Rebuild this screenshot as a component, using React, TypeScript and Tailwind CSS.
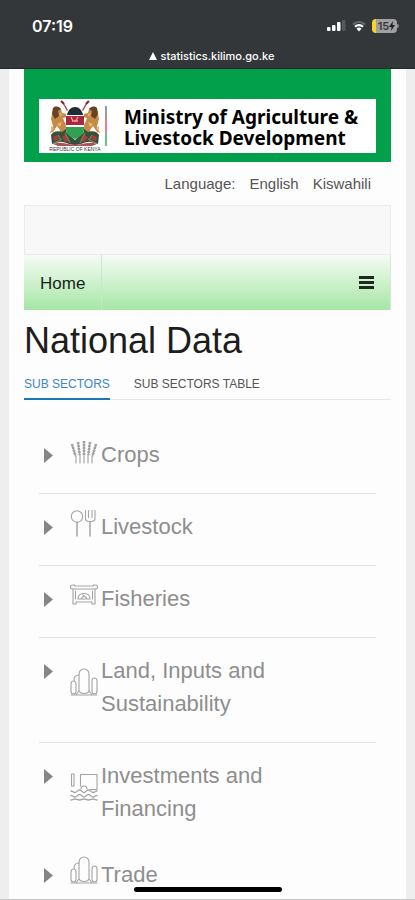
import { useState, type ReactNode } from "react";
import clsx from "clsx";

type Sector = {
  name: string;
  icon: ReactNode;
  iconClass: string;
  rowClass: string;
};

const divided = "border-b border-[#e2e2e2] pb-[22px]";

function IconFrame({ children }: { children: ReactNode }) {
  return (
    <svg
      viewBox="0 0 28 28"
      className="h-7 w-7"
      fill="none"
      stroke="#a3a3a3"
      strokeWidth="1.1"
      strokeLinecap="round"
      strokeLinejoin="round"
      aria-hidden="true"
    >
      {children}
    </svg>
  );
}

function CropsIcon() {
  return (
    <IconFrame>
      <path d="M6 23v-6L2 5M10 23v-7L8 3M14 23V2M18 23v-7l2-13M22 23v-6l4-12" />
      <g stroke="#a0a0a0" strokeWidth="2.600" strokeDasharray="2.200 .8" strokeLinecap="butt">
        <path d="M2 4l3.500 12M8 2l1.700 13M14 1v14M20 2l-1.700 13M26 4l-3.500 12" />
      </g>
    </IconFrame>
  );
}

function LivestockIcon() {
  return (
    <IconFrame>
      <circle cx="7" cy="6.500" r="5.7" />
      <path d="M7 12.200V26" strokeWidth="1.500" />
      <path d="M15.500 .5v8c0 2 1.500 3 3.500 3h2c2 0 4-1 4-3v-8M18.500 .5v7M22 .5v7" />
      <path d="M20 11.500V26" strokeWidth="1.500" />
    </IconFrame>
  );
}

function FisheriesIcon() {
  return (
    <IconFrame>
      <path d="M2 1h2l1 1h18l1-1h2c1 0 1.500 1 1.500 2S27 5 26 5H2C1 5 .5 4 .5 3S1 1 2 1z" />
      <path d="M3 5v15h3v-2h16v2h3V5M5.500 7v8M22.500 7v8" />
      <path d="M8 15c0-3.500 2.500-5.500 6-5.500s6 2 6 5.500zM11.500 15c0-1.500 1-2.500 2.500-2.500s2.500 1 2.500 2.500M14 12l-1.500-2" />
    </IconFrame>
  );
}

function SilosIcon() {
  return (
    <IconFrame>
      <path d="M1 27h26M9 22V6a5 5 0 0 1 10 0v16c0 2-2 3.500-5 3.500S9 24 9 22zM9 23l-3 4M19 23l3 4" />
      <path d="M6 23c0 2-1 3-2.500 3S1 25 1 23v-7c0-2 1-3 2.500-3S6 14 6 16zM4 12.500C4 9 6 7 9 7M27 23c0 2-1 3-2.500 3S22 25 22 23V13c0-2 1-3 2.500-3S27 11 27 13z" />
    </IconFrame>
  );
}

function InvestmentsIcon() {
  return (
    <IconFrame>
      <path d="M1.500 1H4v12M1.500 1v12M4 13H1.500M10.500 13V1.500h16.500v15h-7M11 16c0-2 1-3 3-3s3 1 3 3" />
      <path
        strokeWidth="1.300"
        d="M1 18c2 0 2 1.500 4 1.500S7 17 9.500 17s2.500 2.500 4.500 2.500 2-2.500 4.500-2.500 2.500 2.500 4.500 2.500 2-1.500 4-1.500M1 22.500c2 0 2 1.500 4 1.500s2-2.500 4.500-2.500S12 24 14 24s2-2.500 4.500-2.500S21 24 23 24s2-1.500 4-1.500M1 27c2 0 2-1 4-1s2 1 4.500 1 2.500-1 4.500-1 2 1 4.500 1 2.500-1 4.500-1 2 1 4 1"
      />
    </IconFrame>
  );
}

const sectors: Sector[] = [
  { name: "Crops", icon: <CropsIcon />, iconClass: "mt-0.5", rowClass: divided },
  { name: "Livestock", icon: <LivestockIcon />, iconClass: "mt-0", rowClass: divided },
  { name: "Fisheries", icon: <FisheriesIcon />, iconClass: "mt-0.5", rowClass: divided },
  {
    name: "Land, Inputs and Sustainability",
    icon: <SilosIcon />,
    iconClass: "mt-3.5",
    rowClass: divided,
  },
  {
    name: "Investments and Financing",
    icon: <InvestmentsIcon />,
    iconClass: "mt-3.5",
    rowClass: "pb-[17px]",
  },
  { name: "Trade", icon: <SilosIcon />, iconClass: "-mt-0.5", rowClass: "pb-2" },
];

function StatusBar() {
  return (
    <header className="border-b border-[#23282a] bg-[#343739] font-['Inter',sans-serif] text-white">
      <div className="flex items-center justify-between pt-4 pr-4 pl-8">
        <span className="text-base leading-5 font-semibold">07:19</span>
        <div className="flex items-center gap-1.5">
          <svg viewBox="0 0 19 12" className="h-3 w-[19px]" aria-hidden="true">
            <rect x="0" y="7" width="3.500" height="4" rx="1" fill="#fff" />
            <rect x="5" y="5" width="3.500" height="6" rx="1" fill="#fff" />
            <rect x="10" y="2" width="3.500" height="9" rx="1" fill="#fff" />
            <rect x="15" y="0" width="3.500" height="11" rx="1" fill="#55595b" />
          </svg>
          <svg viewBox="0 0 14 12" className="h-3 w-3.5" fill="none" aria-hidden="true">
            <path d="M1 4.500a8.500 8.500 0 0 1 12 0" stroke="#65696b" strokeWidth="2" />
            <path d="M3 6.700a5.700 5.700 0 0 1 8 0" stroke="#fff" strokeWidth="2.200" />
            <path d="m7 11.500-2.500-2.700a3.500 3.500 0 0 1 5 0z" fill="#fff" />
          </svg>
          <div className="flex items-center">
            <div className="flex h-[14px] w-[25px] items-center justify-center rounded-sm border-l-4 border-[#f7d42c] bg-[#a0a0a0] text-[11px] leading-3 font-semibold text-[#36393b]">
              15
              <svg viewBox="0 0 6 10" className="h-2.5 w-1.5" fill="#222" aria-hidden="true">
                <path d="M4 0 0 6h2.500L2 10l4-6H3.500z" />
              </svg>
            </div>
            <span className="h-1 w-0.5 rounded-r bg-[#8b8b8b]" />
          </div>
        </div>
      </div>
      <div className="flex items-center justify-center gap-1 pt-3 pb-1 pl-2 text-[11px] leading-4 font-medium">
        <svg viewBox="0 0 8 8" className="h-2 w-2" fill="#fff" aria-hidden="true">
          <path d="M4 0 8 8H0z" />
        </svg>
        <span>statistics.kilimo.go.ke</span>
      </div>
    </header>
  );
}

function LionHalf() {
  return (
    <>
      <path d="M13 1 25 22" stroke="#a84a56" strokeWidth="1.500" />
      <path d="M12 1l3 3" stroke="#8a2634" strokeWidth="2" />
      <path
        d="M4 9c1-3 6-3 8 0l1 4 5 1v3l-4 1 2 5 2 5-1 7H9l2-5-3-4-4 6-3 1 3-7-2-7z"
        fill="#c68a48"
      />
      <path d="M4 8c3-3 6-1 8 1l-3 2 1 5-4 3-3-5z" fill="#674326" />
      <path d="m10 13 3 1-1 3zM8 24l5-2-2 5zM2 26l3 2-3 4z" fill="#e8b76f" />
      <path d="M2 35c3-5 8-4 11-3l4-3 9 8v8c-7 0-11-4-16-3l-7 2z" fill="#37503a" />
      <path d="m4 37 4-2 2 4-5 2zm9 0 4-3 4 7-5 1z" fill="#a83946" />
      <path d="m9 35 3 5m4-7 5 10M5 43l8-4" stroke="#70894d" strokeWidth="1.200" />
    </>
  );
}

function CoatOfArms() {
  return (
    <svg viewBox="0 0 52 52" className="h-[52px] w-[52px]" fill="none" role="img" aria-label="Coat of arms">
      <LionHalf />
      <g transform="matrix(-1 0 0 1 52 0)">
        <LionHalf />
      </g>
      <path d="M17 16c0-6 4-9 9-9s9 3 9 9v16l-9 8-9-8z" fill="#fff" />
      <path d="M18 15c1-5 4-8 8-8s7 3 8 8z" fill="#202c31" />
      <path d="M17 16h18v9H17z" fill="#ae263b" />
      <path d="M17 27h18v3c0 4-4 7-9 9-5-2-9-5-9-9z" fill="#31a052" />
      <path d="m22 17 2 4m5-4-3 5m-3-1h6" stroke="#e5a1a6" strokeWidth="1.300" />
      <path d="M4 44c7-3 13 0 22 1 9-1 15-4 22-1l-5 2H9z" fill="#ad545b" />
      <text x="26" y="51" textAnchor="middle" fontSize="5" fill="#333" fontFamily="Liberation Sans, sans-serif">
        REPUBLIC OF KENYA
      </text>
    </svg>
  );
}

function Banner() {
  return (
    <div className="bg-[#03a04c] px-[15px] pt-[30px] pb-[9px]">
      <div className="flex h-[54px] items-center bg-white pl-2.5">
        <CoatOfArms />
        <div className="ml-1 flex h-10 w-0.5 flex-col">
          <span className="flex-1 bg-[#999]" />
          <span className="flex-1 bg-[#e77f87]" />
          <span className="flex-1 bg-[#65c487]" />
        </div>
        <p className="ml-[17px] pt-1 font-['Noto_Sans',sans-serif] text-[19px] leading-[21px] font-bold whitespace-nowrap text-black">
          Ministry of Agriculture &amp;
          <br />
          Livestock Development
        </p>
      </div>
    </div>
  );
}

export default function App() {
  const [tab, setTab] = useState("SUB SECTORS");
  const [open, setOpen] = useState<string | null>(null);

  return (
    <div className="min-h-screen border-b border-[#c8c8c8] bg-[#eeeeee] font-['Liberation_Sans',Arial,sans-serif]">
      <StatusBar />
      <main className="mx-[9px] bg-[#fdfdfd] px-[15px]">
        <Banner />

        <div className="flex justify-end gap-3.5 pt-2.5 pr-5 pb-[9px] text-[15px] leading-6 text-[#555]">
          <span>Language:</span>
          <a href="#en">English</a>
          <a href="#sw">Kiswahili</a>
        </div>

        <div className="h-[50px] border border-[#ececec] bg-[#f8f8f8]" />
        <nav className="flex h-[55px] items-center justify-between border-r border-[#d5ead5] bg-linear-to-b from-[#f5fbf5] to-[#a5e6a5] pr-4">
          <a
            href="#home"
            className="flex h-full items-center border-r border-[#c9e6c9] px-4 pt-0.5 text-[17px] text-[#1c1c1c]"
          >
            Home
          </a>
          <button type="button" aria-label="Menu" className="flex w-[15px] flex-col gap-0.5">
            <span className="h-[3px] bg-[#1f2a1f]" />
            <span className="h-[3px] bg-[#1f2a1f]" />
            <span className="h-[3px] bg-[#1f2a1f]" />
          </button>
        </nav>

        <h1 className="mt-[11px] text-4xl leading-10 text-[#1d1d1d]">National Data</h1>

        <div role="tablist" className="mt-[11px] flex gap-6 border-b border-[#e6e6e6]">
          {["SUB SECTORS", "SUB SECTORS TABLE"].map((label) => (
            <button
              key={label}
              type="button"
              role="tab"
              aria-selected={tab === label}
              onClick={() => setTab(label)}
              className={clsx(
                "-mb-px border-b-2 pt-1 pb-1.5 text-xs leading-4",
                tab === label
                  ? "border-[#1976bd] text-[#3d87c4]"
                  : "border-transparent text-[#555]",
              )}
            >
              {label}
            </button>
          ))}
        </div>

        <ul className="mx-[15px] mt-[22px]">
          {sectors.map((sector) => (
            <li key={sector.name} className={clsx("pt-4", sector.rowClass)}>
              <button
                type="button"
                aria-expanded={open === sector.name}
                onClick={() => setOpen(open === sector.name ? null : sector.name)}
                className="flex w-full items-start pr-20 pl-[5px] text-left text-[22px] leading-[33px] text-[#8e8e8e]"
              >
                <svg
                  viewBox="0 0 9 15"
                  className={clsx("mt-2.5 h-[15px] w-[9px] shrink-0", open === sector.name && "rotate-90")}
                  fill="#858585"
                  aria-hidden="true"
                >
                  <path d="M0 0 9 7.500 0 15z" />
                </svg>
                <span className={clsx("ml-[17px] shrink-0", sector.iconClass)}>{sector.icon}</span>
                <span className="ml-[3px]">{sector.name}</span>
              </button>
            </li>
          ))}
        </ul>
      </main>
      <div className="fixed bottom-2 left-1/2 h-[5px] w-[148px] -translate-x-1/2 rounded-full bg-black" />
    </div>
  );
}
